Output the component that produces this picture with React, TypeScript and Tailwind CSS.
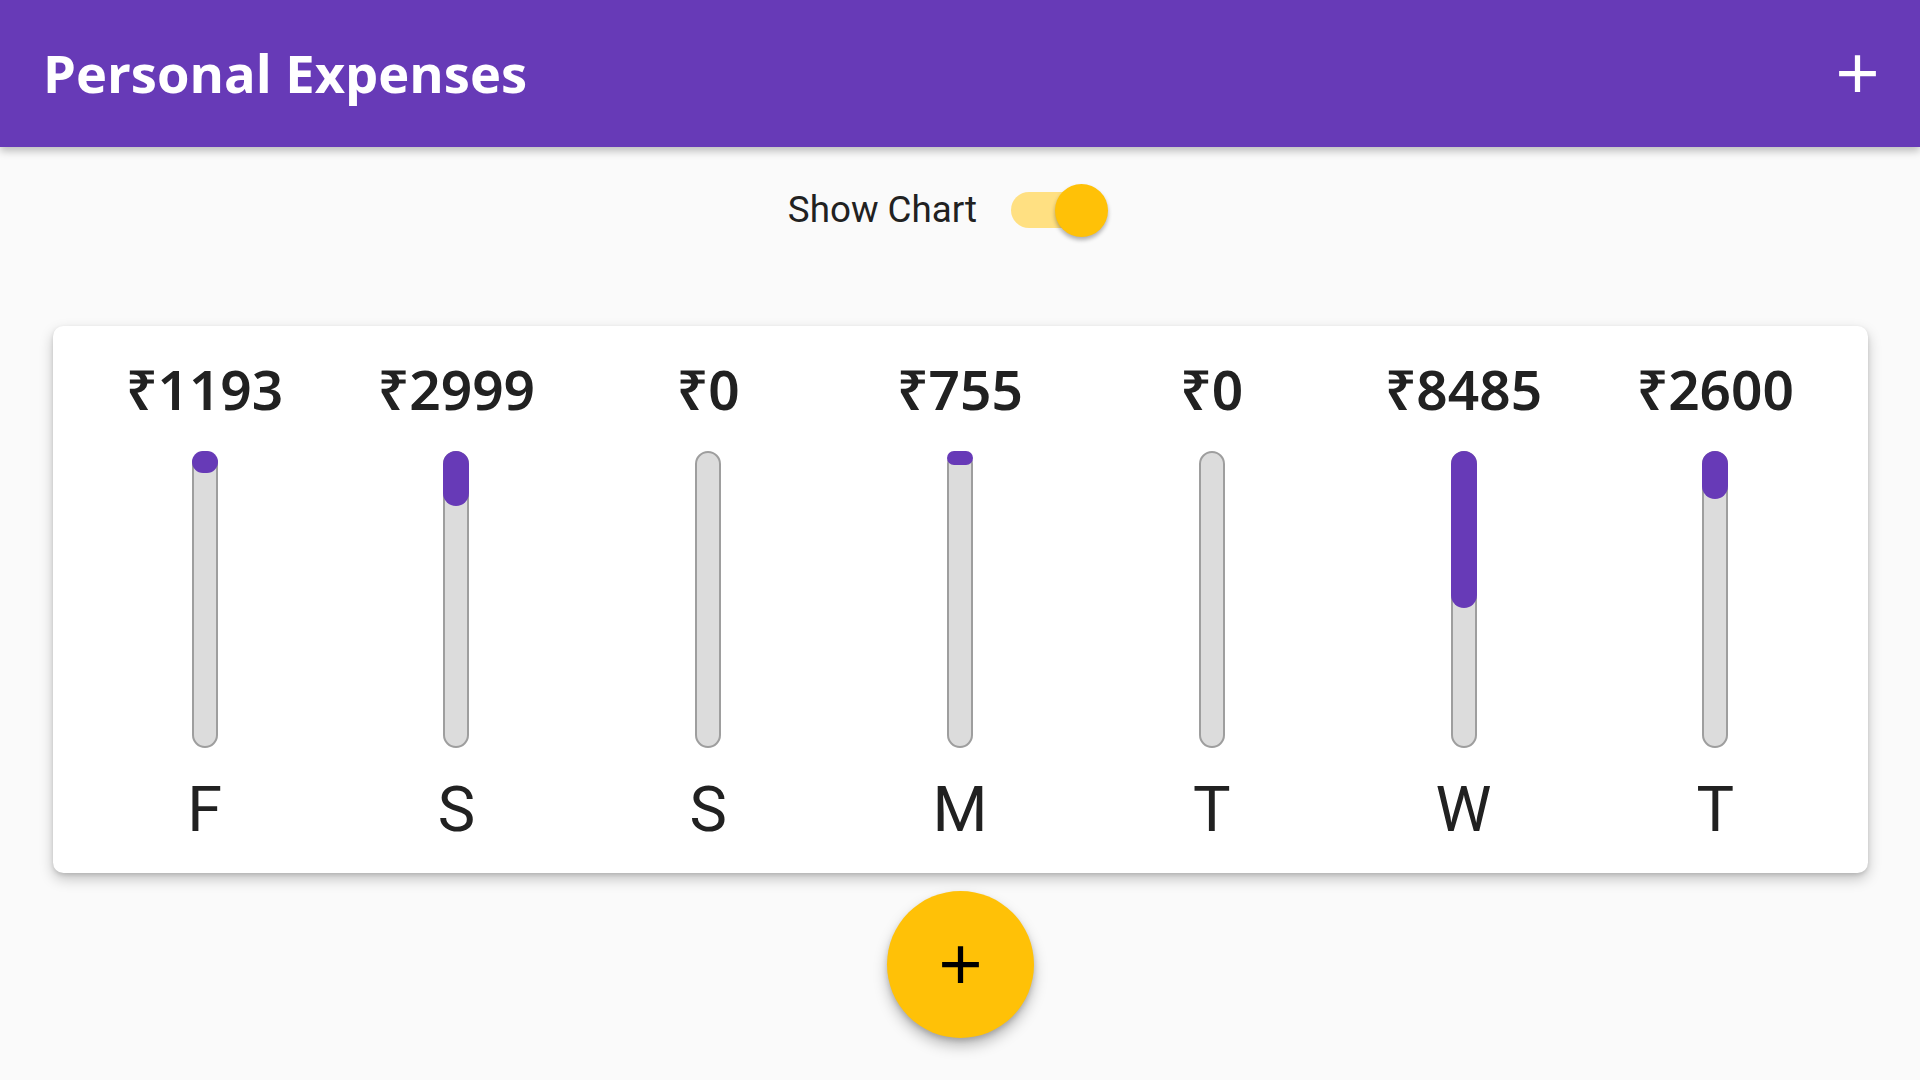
import React from "react";

const data = [
  { day: "F", amount: 1193 },
  { day: "S", amount: 2999 },
  { day: "S", amount: 0 },
  { day: "M", amount: 755 },
  { day: "T", amount: 0 },
  { day: "W", amount: 8485 },
  { day: "T", amount: 2600 },
];

const total = data.reduce((s, d) => s + d.amount, 0);

function Bar({ day, amount }: { day: string; amount: number }) {
  const pct = total === 0 ? 0 : amount / total;
  return (
    <div className="flex flex-1 flex-col items-center">
      <div
        className="flex h-[74px] items-center justify-center whitespace-nowrap text-[55px] leading-[74px] font-semibold text-[#212121]"
        style={{ fontFamily: '"Noto Sans", "DejaVu Sans", sans-serif' }}
      >
        ₹{amount}
      </div>
      <div className="h-[25px]" />
      <div className="relative h-[297px] w-[26px]">
        <div className="absolute inset-0 rounded-[26px] border-[2.6px] border-[#9E9E9E] bg-[#DCDCDC]" />
        {pct > 0 && (
          <div
            className="absolute left-0 top-0 w-full rounded-[26px] bg-[#673AB7]"
            style={{ height: `${pct * 100}%` }}
          />
        )}
      </div>
      <div className="h-[25px]" />
      <div
        className="flex h-[74px] items-center justify-center text-[63px] leading-[74px] text-[#212121]"
        style={{ fontFamily: "Roboto, sans-serif" }}
      >
        {day}
      </div>
    </div>
  );
}

export default function App() {
  return (
    <div className="relative h-[1080px] w-[1920px] overflow-hidden bg-[#FAFAFA]">
      <header className="relative z-10 flex h-[147px] items-center justify-between bg-[#673AB7] pl-[43px] shadow-[0_4px_8px_rgba(0,0,0,0.25)]">
        <h1
          className="text-[52.5px] font-bold text-white"
          style={{ fontFamily: '"Open Sans", sans-serif' }}
        >
          Personal Expenses
        </h1>
        <button className="flex h-[126px] w-[126px] items-center justify-center">
          <svg width="63" height="63" viewBox="0 0 24 24" fill="white">
            <path d="M19 13h-6v6h-2v-6H5v-2h6V5h2v6h6v2z" />
          </svg>
        </button>
      </header>

      <main className="flex flex-col">
        <div className="flex h-[126px] items-center justify-center">
          <span
            className="text-[36.75px] text-[#212121]"
            style={{ fontFamily: "Roboto, sans-serif" }}
          >
            Show Chart
          </span>
          <div className="relative flex h-[126px] w-[155px] items-center justify-center">
            <div className="h-[36.75px] w-[86.6px] rounded-full bg-[#FFE082]" />
            <div className="absolute left-[78px] top-[37px] h-[52.5px] w-[52.5px] rounded-full bg-[#FFC107] shadow-[0_3px_4px_rgba(0,0,0,0.3)]" />
          </div>
        </div>

        <div className="mx-[52.5px] mt-[52.5px] rounded-[10.5px] bg-white p-[26.25px] shadow-[0_6px_14px_rgba(0,0,0,0.22),0_2px_4px_rgba(0,0,0,0.12)]">
          <div className="flex h-[495px]">
            {data.map((d, i) => (
              <Bar key={i} day={d.day} amount={d.amount} />
            ))}
          </div>
        </div>
      </main>

      <button className="absolute left-[886.5px] top-[891px] flex h-[147px] w-[147px] items-center justify-center rounded-full bg-[#FFC107] shadow-[0_8px_14px_rgba(0,0,0,0.25),0_3px_5px_rgba(0,0,0,0.15)]">
        <svg width="63" height="63" viewBox="0 0 24 24" fill="black">
          <path d="M19 13h-6v6h-2v-6H5v-2h6V5h2v6h6v2z" />
        </svg>
      </button>
    </div>
  );
}
